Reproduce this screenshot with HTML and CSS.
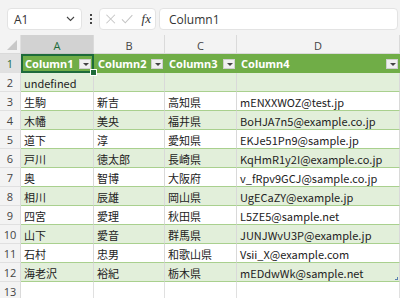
FILE: index.html
```html
<!DOCTYPE html>
<html lang="ja">
<head>
<meta charset="utf-8">
<link rel="stylesheet" href="styles.css">
</head>
<body>
<div class="app">
  <div class="fbar">
    <div class="namebox"><span>A1</span>
      <svg class="chev" width="9" height="6" viewBox="0 0 9 6"><path d="M1 1 L4.5 4.5 L8 1" fill="none" stroke="#444" stroke-width="1.1"/></svg>
    </div>
    <div class="dots"><i></i><i></i><i></i></div>
    <div class="fxbox">
      <svg width="12" height="12" viewBox="0 0 12 12"><path d="M1.5 1.5 L10.5 10.5 M10.5 1.5 L1.5 10.5" stroke="#c4c4c4" stroke-width="1.1"/></svg>
      <svg width="13" height="12" viewBox="0 0 13 12"><path d="M1 6.5 L4.5 10 L12 2" fill="none" stroke="#c4c4c4" stroke-width="1.1"/></svg>
      <span class="fx">fx</span>
    </div>
    <div class="input">Column1</div>
  </div>
  <div class="sheet">
    <div class="corner"><span class="tri"></span></div>
    <div class="ch sel">A</div><div class="ch">B</div><div class="ch">C</div><div class="ch">D</div>

    <div class="rh selr">1</div>
    <div class="th a1">Column1<span class="dd"></span></div>
    <div class="th">Column2<span class="dd"></span></div>
    <div class="th">Column3<span class="dd"></span></div>
    <div class="th">Column4<span class="dd"></span></div>

    <div class="rh">2</div>
    <div class="td band">undefined</div><div class="td band"></div><div class="td band"></div><div class="td band"></div>

    <div class="rh">3</div>
    <div class="td">生駒</div><div class="td">新吉</div><div class="td">高知県</div><div class="td">mENXXWOZ@test.jp</div>
    <div class="rh">4</div>
    <div class="td band">木幡</div><div class="td band">美央</div><div class="td band">福井県</div><div class="td band">BoHJA7n5@example.co.jp</div>
    <div class="rh">5</div>
    <div class="td">道下</div><div class="td">淳</div><div class="td">愛知県</div><div class="td">EKJe51Pn9@sample.jp</div>
    <div class="rh">6</div>
    <div class="td band">戸川</div><div class="td band">徳太郎</div><div class="td band">長崎県</div><div class="td band">KqHmR1y2I@example.co.jp</div>
    <div class="rh">7</div>
    <div class="td">奥</div><div class="td">智博</div><div class="td">大阪府</div><div class="td">v_fRpv9GCJ@sample.co.jp</div>
    <div class="rh">8</div>
    <div class="td band">相川</div><div class="td band">辰雄</div><div class="td band">岡山県</div><div class="td band">UgECaZY@example.jp</div>
    <div class="rh">9</div>
    <div class="td">四宮</div><div class="td">愛理</div><div class="td">秋田県</div><div class="td">L5ZE5@sample.net</div>
    <div class="rh">10</div>
    <div class="td band">山下</div><div class="td band">愛音</div><div class="td band">群馬県</div><div class="td band">JUNJWvU3P@example.jp</div>
    <div class="rh">11</div>
    <div class="td">石村</div><div class="td">忠男</div><div class="td">和歌山県</div><div class="td">Vsii_X@example.com</div>
    <div class="rh">12</div>
    <div class="td band">海老沢</div><div class="td band">裕紀</div><div class="td band">栃木県</div><div class="td band last">mEDdwWk@sample.net<span class="rs"></span></div>

    <div class="rh">13</div>
    <div class="ec"></div><div class="ec"></div><div class="ec"></div><div class="ec"></div>
  </div>
</div>
</body>
</html>
```
FILE: styles.css
```css
* { box-sizing: border-box; }
html, body { margin: 0; padding: 0; }
body {
  width: 400px; height: 298px; overflow: hidden;
  background: #f3f3f3;
  font-family: "Noto Sans CJK JP", "Noto Sans", sans-serif;
  font-size: 11px; color: #222;
}
.app { display: flex; flex-direction: column; }
.fbar {
  height: 35px; display: flex; align-items: flex-start;
  padding: 8px 2px 0 7px; gap: 0;
}
.namebox, .fxbox, .input {
  height: 22px; background: #fff; border: 1px solid #e3e3e3; border-radius: 4px;
  display: flex; align-items: center;
}
.namebox { width: 75px; padding: 0 6px 0 6px; justify-content: space-between; font-family: "Open Sans", sans-serif; font-size: 12px; color: #333; }
.namebox span { padding-top: 1px; }
.dots { width: 17px; height: 22px; display: flex; flex-direction: column; align-items: center; justify-content: center; gap: 2px; }
.dots i { width: 2px; height: 2px; background: #444; display: block; }
.fxbox { width: 57px; padding: 0 4px 0 5px; gap: 5px; justify-content: flex-start; }
.fx { font-family: "Liberation Serif", serif; font-style: italic; font-size: 13px; color: #333; margin-left: 3px; }
.input { flex: 1; margin-left: 3px; padding-left: 9px; font-family: "Open Sans", sans-serif; font-size: 12px; color: #333; }

.sheet {
  display: grid;
  grid-template-columns: 21px 73px 71px 72px 163px;
  grid-auto-rows: 19px;
  background: #fff;
  position: relative;
}
.corner { background: #f3f3f3; border-right: 1px solid #e0e0e0; border-bottom: 1px solid #dadada; position: relative; }
.tri { position: absolute; right: 3px; bottom: 3px; width: 0; height: 0; border-left: 10px solid transparent; border-bottom: 10px solid #c8c8c8; }
.ch {
  background: #f3f3f3; border-right: 1px solid #dadada; border-bottom: 1px solid #dadada;
  display: flex; align-items: center; justify-content: center;
  font-family: "Open Sans", sans-serif; font-size: 11px; color: #444; padding-top: 2px;
}
.ch.sel { background: #d2d2d2; color: #1e6b3c; border-bottom: 1px solid #c4c4c4; }
.rh {
  background: #f3f3f3; border-right: 1px solid #dadada; border-bottom: 1px solid #e0e0e0;
  display: flex; align-items: center; justify-content: center;
  font-family: "Open Sans", sans-serif; font-size: 11px; color: #444;
}
.rh.selr { background: #e1e1e1; color: #1e6b3c; }
.th {
  background: #70ad47; color: #fff; font-weight: bold;
  font-family: "Noto Sans", sans-serif; font-size: 11px;
  display: flex; align-items: center; padding-left: 4px; position: relative;
}
.th.a1 { box-shadow: inset 0 0 0 2px #1d6b3a; }
.a1::after { content: ""; position: absolute; right: -3px; bottom: -3px; width: 5px; height: 5px; background: #1d6b3a; border: 1px solid #fff; z-index: 2; }
.dd {
  position: absolute; right: 2px; top: 5px; width: 12px; height: 10px;
  background: #f0f0f0; border: 1px solid #cfcfcf;
}
.dd::after {
  content: ""; position: absolute; left: 3px; top: 3px; width: 0; height: 0;
  border-left: 3px solid transparent; border-right: 3px solid transparent; border-top: 3px solid #444;
}
.th.a1 .dd { right: 3px; }
.td {
  border-right: 1px solid #d9d9d9; border-bottom: 1px solid #a9d08e;
  display: flex; align-items: center; padding-left: 3px; white-space: nowrap; overflow: hidden;
  color: #222; padding-top: 1px;
}
.td.band { background: #e2efda; }
.td.last { position: relative; overflow: visible; }
.rs { position: absolute; right: 1px; bottom: 1px; width: 3px; height: 3px; border-right: 1px solid #5a7fb0; border-bottom: 1px solid #5a7fb0; }
.ec { border-right: 1px solid #e0e0e0; border-bottom: 1px solid #e0e0e0; }
```
